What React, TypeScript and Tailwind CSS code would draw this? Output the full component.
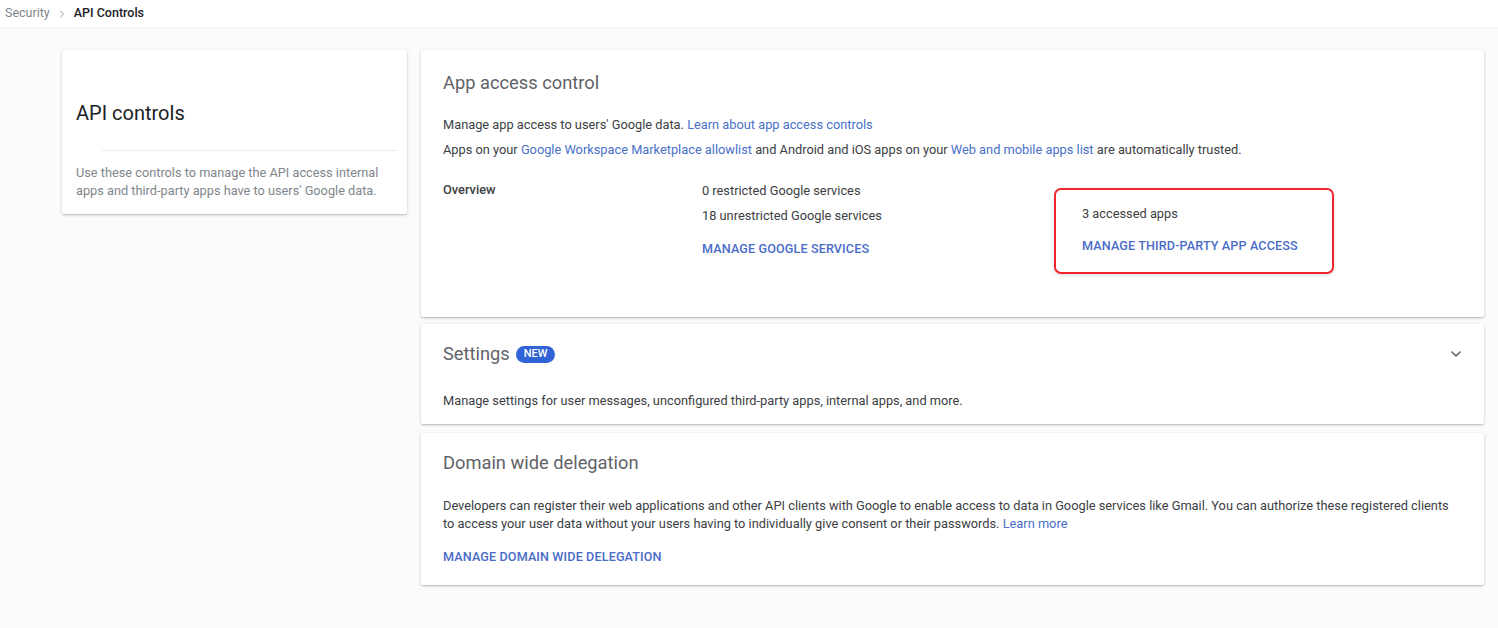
import { ChevronDown, ChevronRight } from "lucide-react";

const link = "text-[#4a70c9]";
const action = "text-[12.6px] font-medium uppercase tracking-[0.01em] text-[#4a6cc8]";

function Card({ className = "", children }: { className?: string; children: React.ReactNode }) {
  return (
    <div className={`bg-white rounded-[2px] shadow-[0_1px_3px_rgba(0,0,0,0.22),0_1px_1px_rgba(0,0,0,0.08)] ${className}`}>
      {children}
    </div>
  );
}

export default function App() {
  return (
    <div className="min-h-[628px] w-full bg-[#fbfbfb] font-['Roboto',sans-serif] text-[12.8px] text-[#3c4043]">
      {/* Breadcrumb bar */}
      <div className="flex h-[27px] items-center gap-[6px] bg-white pl-[5px] text-[12.5px] shadow-[0_1px_2px_rgba(0,0,0,0.04)]">
        <span className="text-[#80868b]">Security</span>
        <ChevronRight className="h-3 w-3 text-[#9aa0a6]" strokeWidth={2} />
        <span className="font-medium text-[#202124]">API Controls</span>
      </div>

      <div className="flex gap-[14px] pl-[62px] pr-[14px] pt-[23px]">
        {/* Sidebar summary */}
        <Card className="h-[164px] w-[345px] shrink-0 pl-[14px] pr-[9px]">
          <h1 className="pt-[51px] text-[20px] leading-6 text-[#202124]">API controls</h1>
          <div className="ml-[26px] mt-[25px] border-t border-[#ececec]" />
          <p className="mt-[13px] text-[12.75px] leading-[18px] text-[#80868b]">
            Use these controls to manage the API access internal apps and third-party apps have to users' Google data.
          </p>
        </Card>

        <div className="flex flex-1 flex-col gap-[7px]">
          {/* App access control */}
          <Card className="h-[267px] px-[22px] pt-[21px]">
            <h2 className="text-[18.3px] leading-6 text-[#5f6368]">App access control</h2>
            <p className="mt-[22px] leading-4">
              Manage app access to users' Google data. <span className={link}>Learn about app access controls</span>
            </p>
            <p className="mt-[9px] leading-4">
              Apps on your <span className={link}>Google Workspace Marketplace allowlist</span> and Android and iOS apps on your{" "}
              <span className={link}>Web and mobile apps list</span> are automatically trusted.
            </p>

            <div className="mt-[24px] flex items-start">
              <div className="w-[259px] font-medium leading-4">Overview</div>
              <div className="w-[352px] pt-[1px]">
                <div className="leading-4">0 restricted Google services</div>
                <div className="mt-[9px] leading-4">18 unrestricted Google services</div>
                <div className={`mt-[17px] leading-4 ${action}`}>Manage Google services</div>
              </div>
              <div className="mt-[6px] flex h-[86px] w-[280px] flex-col rounded-[7px] border-2 border-[#f0272c] pl-[26px] pt-[16px] shadow-[0_1px_3px_rgba(0,0,0,0.15)]">
                <div className="leading-4">3 accessed apps</div>
                <div className={`mt-[16px] leading-4 ${action}`}>Manage third-party app access</div>
              </div>
            </div>
          </Card>

          {/* Settings */}
          <Card className="h-[100px] px-[22px] pt-[18px]">
            <div className="flex items-center">
              <h2 className="text-[18.3px] leading-6 text-[#5f6368]">Settings</h2>
              <span className="ml-[6px] flex h-[17px] items-center rounded-full bg-[#2f63d6] px-[8px] text-[11px] font-medium text-white">
                NEW
              </span>
              <ChevronDown className="ml-auto mr-[-2px] h-[16px] w-[16px] text-[#5f6368]" strokeWidth={2.4} />
            </div>
            <p className="mt-[27px] leading-4">
              Manage settings for user messages, unconfigured third-party apps, internal apps, and more.
            </p>
          </Card>

          {/* Domain wide delegation */}
          <Card className="mt-[2px] h-[152px] px-[22px] pt-[18px]">
            <h2 className="text-[18.3px] leading-6 text-[#5f6368]">Domain wide delegation</h2>
            <p className="mt-[22px] max-w-[1012px] leading-[18px]">
              Developers can register their web applications and other API clients with Google to enable access to data in Google services like Gmail. You can authorize these registered clients to access your user data without your users having to individually give consent or their passwords.{" "}
              <span className={link}>Learn more</span>
            </p>
            <div className={`mt-[16px] leading-4 ${action}`}>Manage domain wide delegation</div>
          </Card>
        </div>
      </div>
    </div>
  );
}
